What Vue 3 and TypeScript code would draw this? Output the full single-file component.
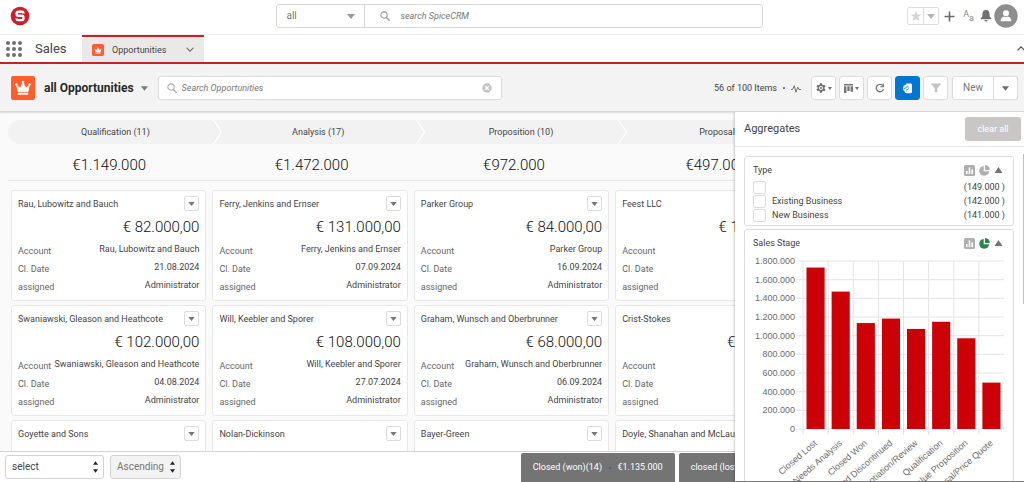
<script setup lang="ts">
import { ref } from 'vue'

interface Card {
  name: string
  amount: string
  date: string
}

interface Stage {
  label: string
  total: string
  cards: Card[]
}

const stages: Stage[] = [
  {
    label: 'Qualification (11)',
    total: '€1.149.000',
    cards: [
      { name: 'Rau, Lubowitz and Bauch', amount: '€ 82.000,00', date: '21.08.2024' },
      { name: 'Swaniawski, Gleason and Heathcote', amount: '€ 102.000,00', date: '04.08.2024' },
      { name: 'Goyette and Sons', amount: '€ 141.000,00', date: '12.08.2024' },
    ],
  },
  {
    label: 'Analysis (17)',
    total: '€1.472.000',
    cards: [
      { name: 'Ferry, Jenkins and Ernser', amount: '€ 131.000,00', date: '07.09.2024' },
      { name: 'Will, Keebler and Sporer', amount: '€ 108.000,00', date: '27.07.2024' },
      { name: 'Nolan-Dickinson', amount: '€ 97.000,00', date: '02.09.2024' },
    ],
  },
  {
    label: 'Proposition (10)',
    total: '€972.000',
    cards: [
      { name: 'Parker Group', amount: '€ 84.000,00', date: '16.09.2024' },
      { name: 'Graham, Wunsch and Oberbrunner', amount: '€ 68.000,00', date: '06.09.2024' },
      { name: 'Bayer-Green', amount: '€ 121.000,00', date: '19.08.2024' },
    ],
  },
  {
    label: 'Proposal (6)',
    total: '€497.000',
    cards: [
      { name: 'Feest LLC', amount: '€ 121.000,00', date: '11.09.2024' },
      { name: 'Crist-Stokes', amount: '€ 97.000,00', date: '03.09.2024' },
      { name: 'Doyle, Shanahan and McLaughlin', amount: '€ 92.000,00', date: '30.08.2024' },
    ],
  },
  { label: '', total: '', cards: [] },
]

const types = ref([
  { label: '', value: '(149.000 )', checked: false },
  { label: 'Existing Business', value: '(142.000 )', checked: false },
  { label: 'New Business', value: '(141.000 )', checked: false },
])

const bars = [
  { label: 'Closed Lost', value: 1730 },
  { label: 'Needs Analysis', value: 1472 },
  { label: 'Closed Won', value: 1135 },
  { label: 'Closed Discontinued', value: 1183 },
  { label: 'Negotiation/Review', value: 1072 },
  { label: 'Qualification', value: 1149 },
  { label: 'Value Proposition', value: 972 },
  { label: 'Proposal/Price Quote', value: 497 },
]

const plot = { left: 58, right: 259, top: 12, bottom: 180, max: 1800 }
const step = (plot.right - plot.left) / bars.length
const yOf = (v: number) => plot.bottom - (v / plot.max) * (plot.bottom - plot.top)
const ticks = [0, 200, 400, 600, 800, 1000, 1200, 1400, 1600, 1800]
const tickLabel = (t: number) => {
  if (t === 0) return '0'
  return (t * 1000).toString().replace(/\B(?=(\d{3})+$)/g, '.')
}

const scope = ref('all')
const query = ref('')
const listQuery = ref('')
const sortField = ref('select')
const sortDir = ref('Ascending')
</script>

<template>
  <div class="app">
    <header class="top">
      <a href="#" class="logo" aria-label="Home">
        <svg viewBox="0 0 20 20" width="20" height="20">
          <circle cx="10" cy="10" r="9.3" fill="#cb1f2b" />
          <path d="M13.4 7.4V7Q13.4 5.700 12 5.700H8.2Q6.7 5.700 6.7 7.2V8.300Q6.7 9.800 8.2 9.800H11.9Q13.4 9.800 13.4 11.300V12.6Q13.4 14.100 11.9 14.100H8.100Q6.7 14.100 6.7 12.800V12.400" fill="none" stroke="#fff" stroke-width="2.4" />
        </svg>
      </a>
      <div class="global">
        <div class="scope">
          <select v-model="scope" aria-label="Search scope"><option>all</option></select>
          <svg class="caret" viewBox="0 0 8 5" width="8" height="5"><path d="M0 0h8L4 5z" fill="#999" /></svg>
        </div>
        <label class="field">
          <svg viewBox="0 0 12 12" width="10" height="10"><circle cx="4.8" cy="4.8" r="3.8" fill="none" stroke="#999" stroke-width="1.3" /><path d="M7.7 7.7 11 11" stroke="#999" stroke-width="1.7" stroke-linecap="round" /></svg>
          <input v-model="query" type="text" placeholder="search SpiceCRM" aria-label="search SpiceCRM" />
        </label>
      </div>
      <div class="tools">
        <div class="fav">
          <button type="button" aria-label="Favorite"><svg viewBox="0 0 12 12" width="12" height="12"><path d="M6 .5 7.5 4.4l4 .2-3.1 2.5 1.1 4L6 8.9l-3.5 2.2 1.1-4L.5 4.6l4-.2z" fill="#d6d6d6" /></svg></button>
          <button type="button" aria-label="Favorites"><svg viewBox="0 0 8 5" width="8" height="5"><path d="M0 0h8L4 5z" fill="#b5b5b5" /></svg></button>
        </div>
        <button type="button" class="plain plus" aria-label="Add"><svg viewBox="0 0 11 11" width="11" height="11"><path d="M5.5.5v10M.5 5.5h10" stroke="#6b6b6b" stroke-width="1.6" /></svg></button>
        <button type="button" class="plain letters" aria-label="Text size"><span>A</span><sub>a</sub></button>
        <button type="button" class="plain bell" aria-label="Notifications"><svg viewBox="0 0 12 12" width="12" height="12"><path d="M6 0C3.5.1 2.4 1.8 2.4 4v2.3L.8 8.2q-.5 1 .3 1h9.8q.8 0 .3-1L9.600 6.300V4C9.600 1.800 8.500.1 6 0zM4.400 10h3.200Q7.300 11.600 6 11.600T4.400 10z" fill="#707070" /></svg></button>
        <button type="button" class="plain" aria-label="User"><svg viewBox="0 0 24 24" width="24" height="24"><circle cx="12" cy="12" r="11.700" fill="#8e8e8e" /><circle cx="12" cy="9.300" r="3" fill="#fff" /><path d="M6.700 17.200v-1.500Q7.300 13 10.300 12.500q1.700 1 3.400 0 3 .5 3.600 3.200v1.500z" fill="#fff" /></svg></button>
      </div>
    </header>

    <nav class="nav">
      <button type="button" class="plain launcher" aria-label="App launcher">
        <svg viewBox="0 0 16 16" width="16" height="16" fill="#707070">
          <template v-for="r in 3" :key="r"><circle v-for="c in 3" :key="c" :cx="c * 6 - 4" :cy="r * 6 - 4" r="2" /></template>
        </svg>
      </button>
      <span class="area">Sales</span>
      <a href="#" class="tab">
        <svg class="crown" viewBox="0 0 24 24" width="12" height="12"><rect width="24" height="24" rx="3.500" fill="#ff5d2d" /><path d="M5.200 9 8.800 11.800 12 6.500l3.200 5.300L18.800 9l-1.500 7H6.700zM6.700 17h10.600v1.800H6.700z" fill="#fff" /></svg>
        <span>Opportunities</span>
        <svg viewBox="0 0 8 5" width="8" height="5"><path d="M.5.6 4 4.200 7.500.6" fill="none" stroke="#777" stroke-width="1.200" /></svg>
      </a>
      <button type="button" class="plain collapse" aria-label="Collapse"><svg viewBox="0 0 8 5" width="8" height="5"><path d="M.5 4.400 4 .8l3.500 3.600" fill="none" stroke="#555" stroke-width="1.200" /></svg></button>
    </nav>

    <div class="toolbar">
      <svg class="crown" viewBox="0 0 24 24" width="24" height="24">
        <rect width="24" height="24" rx="2" fill="#ff5d2d" />
        <path d="M5.600 9.200 9 12 12 6.400 15 12l3.400-2.800-1.300 6.500H6.900z" fill="#fff" stroke="#fff" stroke-width=".6" stroke-linejoin="round" />
        <rect x="6.700" y="16.800" width="10.600" height="1.900" rx=".6" fill="#fff" />
        <circle cx="5.400" cy="8.500" r="1.200" fill="#fff" /><circle cx="12" cy="6" r="1.300" fill="#fff" /><circle cx="18.600" cy="8.500" r="1.200" fill="#fff" />
      </svg>
      <button type="button" class="plain title">all Opportunities <svg viewBox="0 0 8 5" width="7" height="5"><path d="M0 0h8L4 5z" fill="#777" /></svg></button>
      <label class="search">
        <svg viewBox="0 0 12 12" width="10" height="10"><circle cx="4.800" cy="4.800" r="3.800" fill="none" stroke="#aaa" stroke-width="1.300" /><path d="M7.700 7.700 11 11" stroke="#aaa" stroke-width="1.700" stroke-linecap="round" /></svg>
        <input v-model="listQuery" type="text" placeholder="Search Opportunities" aria-label="Search Opportunities" />
        <svg viewBox="0 0 10 10" width="10" height="10"><circle cx="5" cy="5" r="4.700" fill="#c4c4c4" /><path d="m3.200 3.200 3.600 3.600m0-3.600L3.200 6.800" stroke="#fff" stroke-width="1.300" /></svg>
      </label>
      <div class="count">56 of 100 Items <span class="dot"></span>
        <svg viewBox="0 0 10 9" width="10" height="9"><path d="M0 5.500h1.600L3.300 1.600 5 8.300 6.700 3l1.200 2.500H10" fill="none" stroke="#777" stroke-width="1" /></svg>
      </div>
      <div class="actions">
        <button type="button" class="sq" aria-label="Settings">
          <svg viewBox="0 0 10 10" width="10" height="10"><path d="M5 .3v9.400M1 2.700l8 4.600M9 2.700 1 7.300" stroke="#6f6f6f" stroke-width="2.200" /><circle cx="5" cy="5" r="3.400" fill="#6f6f6f" /><circle cx="5" cy="5" r="2.100" fill="#fff" /><circle cx="5" cy="5" r="1.100" fill="#6f6f6f" /></svg>
          <svg viewBox="0 0 4 3" width="4" height="3"><path d="M0 0h4L2 3z" fill="#6f6f6f" /></svg>
        </button>
        <button type="button" class="sq" aria-label="Display as">
          <svg viewBox="0 0 9 9" width="9" height="9" fill="#777"><path d="M0 0h9v1.400H0zM0 2.300h2.400V9H0zM3.300 2.300h2.400V7H3.300zM6.600 2.300H9v5.500H6.600z" /></svg>
          <svg viewBox="0 0 4 3" width="4" height="3"><path d="M0 0h4L2 3z" fill="#6f6f6f" /></svg>
        </button>
        <button type="button" class="sq" aria-label="Refresh"><svg viewBox="0 0 10 10" width="10" height="10"><path d="M7.900 2.700A3.700 3.700 0 1 0 8.500 6.300" fill="none" stroke="#707070" stroke-width="1.300" /><path d="M8.900.5v3.800H5.300V3.200h2.500V.5z" fill="#707070" /></svg></button>
        <button type="button" class="sq on" aria-label="Aggregates"><svg viewBox="0 0 11 11" width="11" height="11"><path d="M4.500.6H8.700Q9.900.6 9.900 1.800V8.800Q9.900 10.300 8.400 10.300H4.500Q2.600 10.300 2.600 8.600V3z" fill="#fff" /><circle cx="4.200" cy="5.200" r="3.200" fill="#fff" /><path d="M1.800 5.300H3.200L4.600 3.900H6.700M6.500 5.400Q6 7 4.200 7" fill="none" stroke="#0176d3" stroke-width=".9" /></svg></button>
        <button type="button" class="sq" aria-label="Filter"><svg viewBox="0 0 10 10" width="10" height="10"><path d="M.4.500h9.200v1L6.200 5.200v4.100H3.800V5.200L.4 1.500z" fill="#c3c3c3" /></svg></button>
        <div class="new">
          <button type="button">New</button>
          <button type="button" aria-label="More actions"><svg viewBox="0 0 8 5" width="7" height="5"><path d="M0 0h8L4 5z" fill="#6b6b6b" /></svg></button>
        </div>
      </div>
    </div>

    <main class="main">
      <section class="board">
        <ol class="path">
          <li v-for="(s, i) in stages" :key="i">
            {{ s.label }}
            <svg v-if="i < 4" viewBox="0 0 9 24" width="9" height="24"><path d="M.5 0 8.500 12 .5 24" fill="none" stroke="#fff" stroke-width="1.200" /></svg>
          </li>
        </ol>
        <div class="totals"><div v-for="(s, i) in stages" :key="i">{{ s.total }}</div></div>
        <div class="columns">
          <div v-for="(s, i) in stages" :key="i" class="column">
            <article v-for="c in s.cards" :key="c.name" class="card">
              <div class="head">
                <a href="#">{{ c.name }}</a>
                <button type="button" :aria-label="'Actions for ' + c.name"><svg viewBox="0 0 8 5" width="7" height="4"><path d="M0 0h8L4 5z" fill="#777" /></svg></button>
              </div>
              <div class="amount">{{ c.amount }}</div>
              <dl>
                <dt>Account</dt><dd>{{ c.name }}</dd>
                <dt>Cl. Date</dt><dd>{{ c.date }}</dd>
                <dt>assigned</dt><dd>Administrator</dd>
              </dl>
            </article>
          </div>
        </div>
      </section>

      <footer class="footer">
        <div class="pick wide">
          <select v-model="sortField" aria-label="Sort field"><option>select</option></select>
          <svg viewBox="0 0 5 12" width="5" height="12"><path d="M0 3.800h5L2.500.3zM0 8.200h5l-2.500 3.500z" fill="#222" /></svg>
        </div>
        <div class="pick muted">
          <select v-model="sortDir" aria-label="Sort direction"><option>Ascending</option></select>
          <svg viewBox="0 0 5 12" width="5" height="12"><path d="M0 3.800h5L2.500.3zM0 8.200h5l-2.500 3.500z" fill="#222" /></svg>
        </div>
        <div class="sums">
          <div class="sum">Closed (won)(14) <span class="dot"></span> €1.135.000</div>
          <div class="sum grow">closed (lost)</div>
        </div>
      </footer>

      <aside class="panel">
        <div class="phead">
          <h2>Aggregates</h2>
          <button type="button">clear all</button>
        </div>
        <div class="scroller">
          <section class="box">
            <div class="bhead">
              <h3>Type</h3>
              <svg viewBox="0 0 11 11" width="11" height="11"><rect width="11" height="11" rx="1.500" fill="#b0b0b0" /><path d="M2 6h1.600v3H2zM4.700 2.500h1.600V9H4.700zM7.400 4.500H9V9H7.400z" fill="#fff" /></svg>
              <svg viewBox="0 0 11 11" width="11" height="11" fill="#b0b0b0"><path d="M4.700.9V6.300H10.100A4.900 4.900 0 1 1 4.700.9z" /><path d="M6 0A5 5 0 0 1 10.700 4.900L8 5 6 5z" /></svg>
              <svg viewBox="0 0 8 6" width="9" height="6"><path d="M0 6h8L4 0z" fill="#747474" /></svg>
            </div>
            <label v-for="t in types" :key="t.value" class="opt">
              <input v-model="t.checked" type="checkbox" :aria-label="t.label || 'No type'" />
              <span>{{ t.label }}</span>
              <span class="val">{{ t.value }}</span>
            </label>
          </section>
          <section class="box">
            <div class="bhead">
              <h3>Sales Stage</h3>
              <svg viewBox="0 0 11 11" width="11" height="11"><rect width="11" height="11" rx="1.500" fill="#b0b0b0" /><path d="M2 6h1.600v3H2zM4.700 2.500h1.600V9H4.700zM7.400 4.500H9V9H7.400z" fill="#fff" /></svg>
              <svg viewBox="0 0 11 11" width="11" height="11" fill="#2e844a"><path d="M4.700.9V6.300H10.100A4.900 4.900 0 1 1 4.700.9z" /><path d="M6 0A5 5 0 0 1 10.700 4.900L8 5 6 5z" /></svg>
              <svg viewBox="0 0 8 6" width="9" height="6"><path d="M0 6h8L4 0z" fill="#747474" /></svg>
            </div>
            <svg class="chart" viewBox="0 0 268 280">
              <g stroke="#e4e4e4">
                <line v-for="t in ticks" :key="t" :x1="plot.left - 6" :x2="plot.right" :y1="yOf(t)" :y2="yOf(t)" />
                <line v-for="n in 8" :key="'v' + n" :x1="plot.left + (n - 1) * step" :x2="plot.left + (n - 1) * step" :y1="plot.top" :y2="plot.bottom + 6" />
              </g>
              <text v-for="t in ticks" :key="'t' + t" :x="plot.left - 8" :y="yOf(t) + 3" text-anchor="end">{{ tickLabel(t) }}</text>
              <g v-for="(b, n) in bars" :key="b.label">
                <rect :x="plot.left + n * step + 3.500" :width="step - 7" :y="yOf(b.value)" :height="plot.bottom - yOf(b.value)" fill="#cc0007" />
                <text :transform="`translate(${plot.left + (n + 0.5) * step + 2} 195) rotate(-41)`" text-anchor="end">{{ b.label }}</text>
              </g>
            </svg>
          </section>
        </div>
        <span class="thumb"></span>
      </aside>
    </main>
  </div>
</template>

<style>
body { margin: 0; }
</style>

<style scoped>
* { box-sizing: border-box; }
.app { display: flex; flex-direction: column; height: 100vh; overflow: hidden; background: #fff; color: #444; font: 9px/12px Roboto, "Liberation Sans", sans-serif; }
button, input, select { font: inherit; color: inherit; margin: 0; }
a { color: inherit; text-decoration: none; }
svg { display: block; flex: none; }
h2, h3, ol, dl, dd { margin: 0; padding: 0; font-weight: 400; }
button { display: flex; align-items: center; justify-content: center; padding: 0; border: 1px solid #dcdcdc; border-radius: 3px; background: #fff; cursor: pointer; }
.plain { border: 0; background: none; }
input::placeholder { color: #777; font-style: italic; opacity: 1; }

.top { display: grid; grid-template-columns: 27% 1fr 25.5%; align-items: center; padding: 4px 0 6px; border-bottom: 1px solid #ececec; }
.logo { padding-left: 10px; }
.global { display: flex; height: 24px; border: 1px solid #d8d8d8; border-radius: 3px; }
.scope { position: relative; width: 88px; border-right: 1px solid #d8d8d8; }
.scope select { width: 100%; height: 100%; padding: 0 9px; border: 0; background: none; appearance: none; color: #777; font-size: 10px; }
.scope .caret { position: absolute; right: 9px; top: 9px; pointer-events: none; }
.field { display: flex; flex: 1; align-items: center; gap: 10px; padding-left: 15px; }
.field input, .search input { flex: 1; min-width: 0; border: 0; padding: 0; background: none; outline: none; }
.tools { display: flex; align-items: center; justify-content: flex-end; padding-right: 6px; }
.fav { display: flex; border: 1px solid #dedede; border-radius: 2px; }
.fav button { width: 15px; height: 16px; border: 0; }
.fav button + button { border-left: 1px solid #dedede; border-radius: 0; }
.plus { margin-left: 5px; }
.letters { margin: 0 6px 0 8px; color: #8a8a8a; align-items: flex-start; font-size: 9px; line-height: 9px; }
.letters sub { padding-top: 4px; font-size: 9px; line-height: 9px; vertical-align: baseline; }
.bell { margin-right: 2px; }

.nav { display: flex; align-items: stretch; height: 29px; border-bottom: 2px solid #ca1f26; }
.launcher { padding-left: 6px; }
.area { width: 60px; padding-left: 13px; font-size: 13px; line-height: 27px; }
.tab { display: flex; align-items: center; gap: 8px; width: 122px; padding: 0 10px; border-top: 2px solid #ca1f26; background: #ebe9e8; }
.tab span { flex: 1; }
.collapse { margin: 0 -1px 0 auto; }

.toolbar { display: flex; align-items: center; padding: 12px 6px 11px 11px; border-bottom: 1px solid #d6d6d6; background: #f3f3f3; }
.title { gap: 7px; margin: 0 10px 0 9px; font-size: 12px; line-height: 16px; font-weight: 700; color: #2a2a2a; white-space: nowrap; }
.search { display: flex; flex: 0 1 344px; align-items: center; gap: 5px; height: 24px; padding: 0 9px 0 8px; border: 1px solid #dcdcdc; border-radius: 3px; background: #fff; }
.count { display: flex; align-items: center; gap: 6px; margin-left: auto; white-space: nowrap; }
.dot { width: 2px; height: 2px; border-radius: 1px; background: #3c5a80; }
.actions { display: flex; gap: 3px; margin-left: 10px; }
.sq { gap: 2px; width: 25px; height: 24px; }
.sq.on { border-color: #0176d3; background: #0176d3; }
.new { display: flex; margin-left: 1px; color: #777; }
.new button { width: 42px; height: 24px; border-radius: 3px 0 0 3px; font-size: 10px; }
.new button + button { width: 24px; border-left: 0; border-radius: 0 3px 3px 0; }

.main { position: relative; display: flex; flex: 1; flex-direction: column; min-height: 0; }
.board { flex: 1; min-height: 0; overflow: hidden; padding-top: 8px; background: #fafafa; box-shadow: inset 0 2px 2px -1px rgba(0, 0, 0, .12); }
.path { display: grid; grid-template-columns: repeat(5, 1fr); margin: 0 -4px 0 8px; padding-left: 6px; border-radius: 12px 0 0 12px; background: #f2f2f2; list-style: none; }
.path li { position: relative; height: 24px; line-height: 24px; text-align: center; }
.path svg { position: absolute; top: 0; right: -5px; }
.totals { display: grid; grid-template-columns: repeat(5, 1fr); margin: 0 4px 0 8px; padding: 11px 0 5px; border-bottom: 1px solid #e6e6e6; color: #111; font-size: 15px; font-weight: 300; line-height: 20px; text-align: center; }
.columns { display: grid; grid-template-columns: repeat(5, 1fr); gap: 6px; padding: 9px 12px 0 11px; }
.column { display: flex; flex-direction: column; gap: 4px; min-width: 0; }
.card { padding: 5px 6px 6px; border: 1px solid #e8e8e8; border-radius: 3px; background: #fff; }
.head { display: flex; align-items: center; justify-content: space-between; white-space: nowrap; }
.head button { width: 15px; height: 15px; border-radius: 2px; }
.amount { margin: 6px 0 3px; color: #111; font-size: 15px; font-weight: 300; line-height: 20px; text-align: right; }
dl { display: grid; grid-template-columns: auto 1fr; grid-auto-rows: 18px; line-height: 18px; white-space: nowrap; }
dt { padding-top: 2px; color: #666; }
dd { text-align: right; }

.footer { display: flex; align-items: center; gap: 6px; height: 31px; padding-left: 5px; border-top: 1px solid #d4d4d4; background: #fff; }
.pick { position: relative; width: 71px; height: 24px; }
.pick.wide { width: 99px; }
.pick select { width: 100%; height: 100%; padding: 0 6px; border: 1px solid #d4d4d4; border-radius: 3px; background: #fff; appearance: none; font-size: 10px; }
.pick.muted select { background: #f3f3f3; color: #777; }
.pick svg { position: absolute; top: 6px; right: 6px; pointer-events: none; }
.sums { display: flex; align-self: flex-end; gap: 4px; width: calc(49% + 4px); margin-left: auto; color: #fff; line-height: 29px; white-space: nowrap; }
.sum { display: flex; align-items: center; justify-content: space-between; width: 154px; padding: 0 12px; border-radius: 2px 2px 0 0; background: #747474; }
.sum.grow { flex: 1; }

.panel { position: absolute; top: 0; right: 0; bottom: 0; display: flex; flex-direction: column; width: 289px; border-bottom: 1px solid #777; background: #fff; box-shadow: 0 0 3px rgba(0, 0, 0, .35); clip-path: inset(0 0 0 -6px); }
.phead { display: flex; align-items: center; justify-content: space-between; padding: 5px 3px 5px 9px; border-bottom: 1px solid #e6e6e6; }
.phead h2 { font-size: 11px; line-height: 16px; }
.phead button { width: 56px; height: 24px; border: 0; background: #c9c7c5; color: #fff; font-size: 9px; }
.scroller { flex: 1; min-height: 0; overflow: hidden; padding: 9px 10px 0 9px; }
.thumb { position: absolute; top: 42px; right: 0; width: 1px; height: 150px; background: #c1c1c1; }
.box { margin-bottom: 3px; padding: 7px 8px 3px; border: 1px solid #dcdcdc; border-radius: 3px; }
.bhead { display: flex; align-items: center; gap: 4px; padding-right: 2px; line-height: 12px; }
.bhead h3 { flex: 1; font-size: 9px; }
.opt { display: flex; align-items: center; height: 14px; }
.bhead + .opt { margin-top: 4px; }
.opt input { flex: none; width: 13px; height: 13px; margin-right: 6px; border: 1px solid #dcdcdc; border-radius: 2px; background: #fff; appearance: none; }
.opt .val { margin-left: auto; }
.chart { width: 268px; margin: 0 -8px; }
.chart text { fill: #6c6c6c; font: 9px "Liberation Sans", Arial, sans-serif; }
</style>
